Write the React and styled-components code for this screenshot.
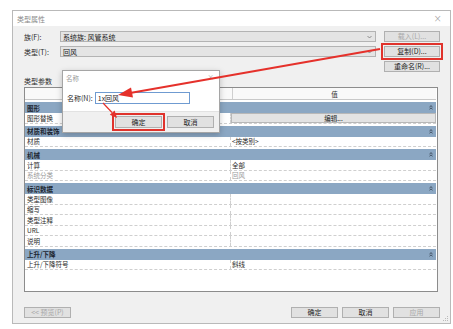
import React from 'react';
import styled, { createGlobalStyle } from 'styled-components';

const GlobalStyle = createGlobalStyle`
  html, body {
    margin: 0;
    padding: 0;
    background: #ffffff;
  }
  body {
    font-family: "Noto Sans CJK SC", "Liberation Sans", sans-serif;
    font-size: 7px;
    color: #1e1e1e;
  }
`;

const Page = styled.div`
  position: relative;
  width: 453px;
  height: 329px;
  padding: 10px 2px 5px 12px;
  box-sizing: border-box;
`;

const Window = styled.div`
  position: relative;
  height: 314px;
  box-sizing: border-box;
  border: 1px solid #b9b9b9;
  background: #f0f0f0;
  display: flex;
  flex-direction: column;
`;

const TitleBar = styled.div`
  height: 15px;
  background: #ffffff;
  display: flex;
  align-items: center;
  justify-content: space-between;
  padding: 0 8px 0 4px;
  color: #8a8a8a;
  font-size: 7px;
`;

const Close = styled.span`
  font-size: 10px;
  color: #9a9a9a;
  font-family: "DejaVu Sans", sans-serif;
  font-weight: 300;
`;

const Body = styled.div`
  flex: 1;
  display: flex;
  flex-direction: column;
  padding: 5px 10px 5px 11px;
`;

const TopGrid = styled.div`
  display: grid;
  grid-template-columns: 28px 1fr 56px;
  column-gap: 8px;
  row-gap: 4px;
  grid-auto-rows: 11px;
  align-items: center;
`;

const Label = styled.span`
  font-size: 7px;
  color: #2a2a2a;
  white-space: nowrap;
`;

const Combo = styled.div`
  height: 11px;
  box-sizing: border-box;
  border: 1px solid #b3b3b3;
  background: #e4e4e4;
  display: flex;
  align-items: center;
  justify-content: space-between;
  padding: 0 3px 0 2px;
  font-size: 7px;
  color: #222;
`;

const Button = styled.button`
  height: ${p => p.$h || 11}px;
  width: 100%;
  box-sizing: border-box;
  border: 1px solid #b0b0b0;
  background: #e1e1e1;
  font-family: inherit;
  font-size: 7px;
  color: ${p => (p.disabled ? '#a8a8a8' : '#1e1e1e')};
  padding: 0;
  margin: 0;
  line-height: 1;
  outline: ${p => (p.$marked ? '2px solid #e0332c' : 'none')};
  outline-offset: 1px;
`;

const SectionLabel = styled.div`
  margin-top: 3px;
  height: 12px;
  line-height: 12px;
  font-size: 7px;
  color: #2a2a2a;
`;

const Table = styled.div`
  height: 205px;
  margin-right: 2px;
  box-sizing: border-box;
  border: 1px solid #8c8c8c;
  background: #ffffff;
  display: flex;
  flex-direction: column;
`;

const HeaderRow = styled.div`
  display: grid;
  grid-template-columns: 207px 1fr;
  height: 11px;
  background: #f9f9f9;
  border-bottom: 1px solid #c9c9c9;
  margin-right: 1px;
`;

const HeaderCell = styled.div`
  display: flex;
  align-items: center;
  justify-content: center;
  font-size: 6.5px;
  color: #333;
  border-left: ${p => (p.$first ? 'none' : '1px solid #cfcfcf')};
`;

const GroupRow = styled.div`
  margin-top: 2px;
  height: 11px;
  background: #8ba7c3;
  display: flex;
  align-items: center;
  justify-content: space-between;
  padding: 0 3px 0 2px;
  margin-right: 1px;
  font-size: 6.5px;
  font-weight: 600;
  color: #1c2530;
`;

const Row = styled.div`
  display: grid;
  grid-template-columns: 205px 1fr;
  height: 10.5px;
  box-sizing: border-box;
  border-bottom: 1px dashed #cfcfcf;
  margin-right: 1px;
`;

const Cell = styled.div`
  display: flex;
  align-items: center;
  padding-left: ${p => (p.$value ? 1 : 2)}px;
  font-size: 6.5px;
  color: ${p => (p.$muted ? '#9a9a9a' : '#2a2a2a')};
  border-left: ${p => (p.$value ? '1px dashed #cfcfcf' : 'none')};
  white-space: nowrap;
  overflow: hidden;
`;

const CellButton = styled.div`
  flex: 1;
  height: 100%;
  box-sizing: border-box;
  border: 1px solid #b8b8b8;
  background: #e3e3e3;
  display: flex;
  align-items: center;
  justify-content: center;
  font-size: 6.5px;
  color: #222;
  margin-left: -1px;
`;

const Footer = styled.div`
  margin-top: auto;
  display: flex;
  gap: 4px;
  align-items: center;
`;

const FooterButton = styled(Button)`
  width: 47px;
`;

const Spacer = styled.div`
  flex: 1;
`;

const Dialog = styled.div`
  position: absolute;
  left: 49px;
  top: 59px;
  width: 158px;
  height: 63px;
  box-sizing: border-box;
  border: 1px solid #a5a5a5;
  box-shadow: 0 2px 6px rgba(0, 0, 0, 0.22);
  background: #ffffff;
  display: flex;
  flex-direction: column;
  z-index: 5;
`;

const DialogTitle = styled.div`
  height: 13px;
  display: flex;
  align-items: center;
  justify-content: space-between;
  padding: 0 5px 0 3px;
  color: #9a9a9a;
  font-size: 6.5px;
`;

const DialogContent = styled.div`
  flex: 1;
  display: flex;
  align-items: center;
  gap: 2px;
  padding-left: 4px;
`;

const Input = styled.div`
  width: 95px;
  height: 12px;
  box-sizing: border-box;
  border: 1px solid #6f9bd1;
  background: #fff;
  display: flex;
  align-items: center;
  padding-left: 2px;
  font-size: 7px;
  color: #1e1e1e;
`;

const DialogFooter = styled.div`
  height: 20px;
  background: #f0f0f0;
  border-top: 1px solid #e2e2e2;
  display: flex;
  align-items: center;
  justify-content: flex-end;
  gap: 5px;
  padding-right: 5px;
`;

const DialogButton = styled(Button)`
  width: 47px;
  height: 12px;
`;

const Overlay = styled.svg`
  position: absolute;
  left: 0;
  top: 0;
  pointer-events: none;
  z-index: 10;
`;

const Grip = styled.svg`
  position: absolute;
  right: 1px;
  bottom: 1px;
`;

const Chevron = () => (
  <svg width="5" height="4" viewBox="0 0 5 4">
    <path d="M0.5 1 L2.5 3 L4.5 1" fill="none" stroke="#777" strokeWidth="0.8" />
  </svg>
);

const Collapse = () => (
  <svg width="4" height="5" viewBox="0 0 4 5">
    <path d="M0.5 2 L2 0.7 L3.5 2 M0.5 4.2 L2 2.9 L3.5 4.2" fill="none" stroke="#1c2530" strokeWidth="0.7" />
  </svg>
);

const rows = [
  { group: '图形' },
  { label: '图形替换', button: '编辑...' },
  { group: '材质和装饰' },
  { label: '材质', value: '<按类别>' },
  { group: '机械' },
  { label: '计算', value: '全部' },
  { label: '系统分类', value: '回风', muted: true },
  { group: '标识数据' },
  { label: '类型图像' },
  { label: '缩写' },
  { label: '类型注释' },
  { label: 'URL' },
  { label: '说明' },
  { group: '上升/下降' },
  { label: '上升/下降符号', value: '斜线' },
];

export default function App() {
  return (
    <Page>
      <GlobalStyle />
      <Window>
        <TitleBar>
          <span>类型属性</span>
          <Close>×</Close>
        </TitleBar>
        <Body>
          <TopGrid>
            <Label>族(F):</Label>
            <Combo>
              <span>系统族: 风管系统</span>
              <Chevron />
            </Combo>
            <Button disabled>载入(L)...</Button>

            <Label>类型(T):</Label>
            <Combo>
              <span>回风</span>
              <Chevron />
            </Combo>
            <Button $marked>复制(D)...</Button>

            <span />
            <span />
            <Button>重命名(R)...</Button>
          </TopGrid>

          <SectionLabel>类型参数</SectionLabel>

          <Table>
            <HeaderRow>
              <HeaderCell $first>参数</HeaderCell>
              <HeaderCell>值</HeaderCell>
            </HeaderRow>
            {rows.map((r, i) =>
              r.group ? (
                <GroupRow key={i}>
                  <span>{r.group}</span>
                  <Collapse />
                </GroupRow>
              ) : (
                <Row key={i}>
                  <Cell $muted={r.muted}>{r.label}</Cell>
                  <Cell $value $muted={r.muted}>
                    {r.button ? <CellButton>{r.button}</CellButton> : r.value}
                  </Cell>
                </Row>
              )
            )}
          </Table>

          <Footer>
            <FooterButton disabled>&lt;&lt; 预览(P)</FooterButton>
            <Spacer />
            <FooterButton>确定</FooterButton>
            <FooterButton>取消</FooterButton>
            <FooterButton disabled>应用</FooterButton>
          </Footer>
        </Body>

        <Dialog>
          <DialogTitle>
            <span>名称</span>
            <Close style={{ fontSize: 8 }}>×</Close>
          </DialogTitle>
          <DialogContent>
            <Label>名称(N):</Label>
            <Input>1x回风</Input>
          </DialogContent>
          <DialogFooter>
            <DialogButton $marked>确定</DialogButton>
            <DialogButton>取消</DialogButton>
          </DialogFooter>
        </Dialog>

        <Grip width="6" height="6" viewBox="0 0 6 6">
          <rect x="4" y="0" width="1" height="1" fill="#bbb" />
          <rect x="2" y="2" width="1" height="1" fill="#bbb" />
          <rect x="4" y="2" width="1" height="1" fill="#bbb" />
          <rect x="0" y="4" width="1" height="1" fill="#bbb" />
          <rect x="2" y="4" width="1" height="1" fill="#bbb" />
          <rect x="4" y="4" width="1" height="1" fill="#bbb" />
        </Grip>
      </Window>

      <Overlay width="453" height="329" viewBox="0 0 453 329">
        <line x1="380" y1="49" x2="130" y2="93" stroke="#e5312b" strokeWidth="2" />
        <polygon points="118,95 133,97.5 131,87.5" fill="#e5312b" />
        <line x1="103" y1="103" x2="112" y2="112.5" stroke="#e5312b" strokeWidth="1.2" />
        <polygon points="117,118 109.8,114.8 114.6,110.4" fill="#e5312b" />
      </Overlay>
    </Page>
  );
}
